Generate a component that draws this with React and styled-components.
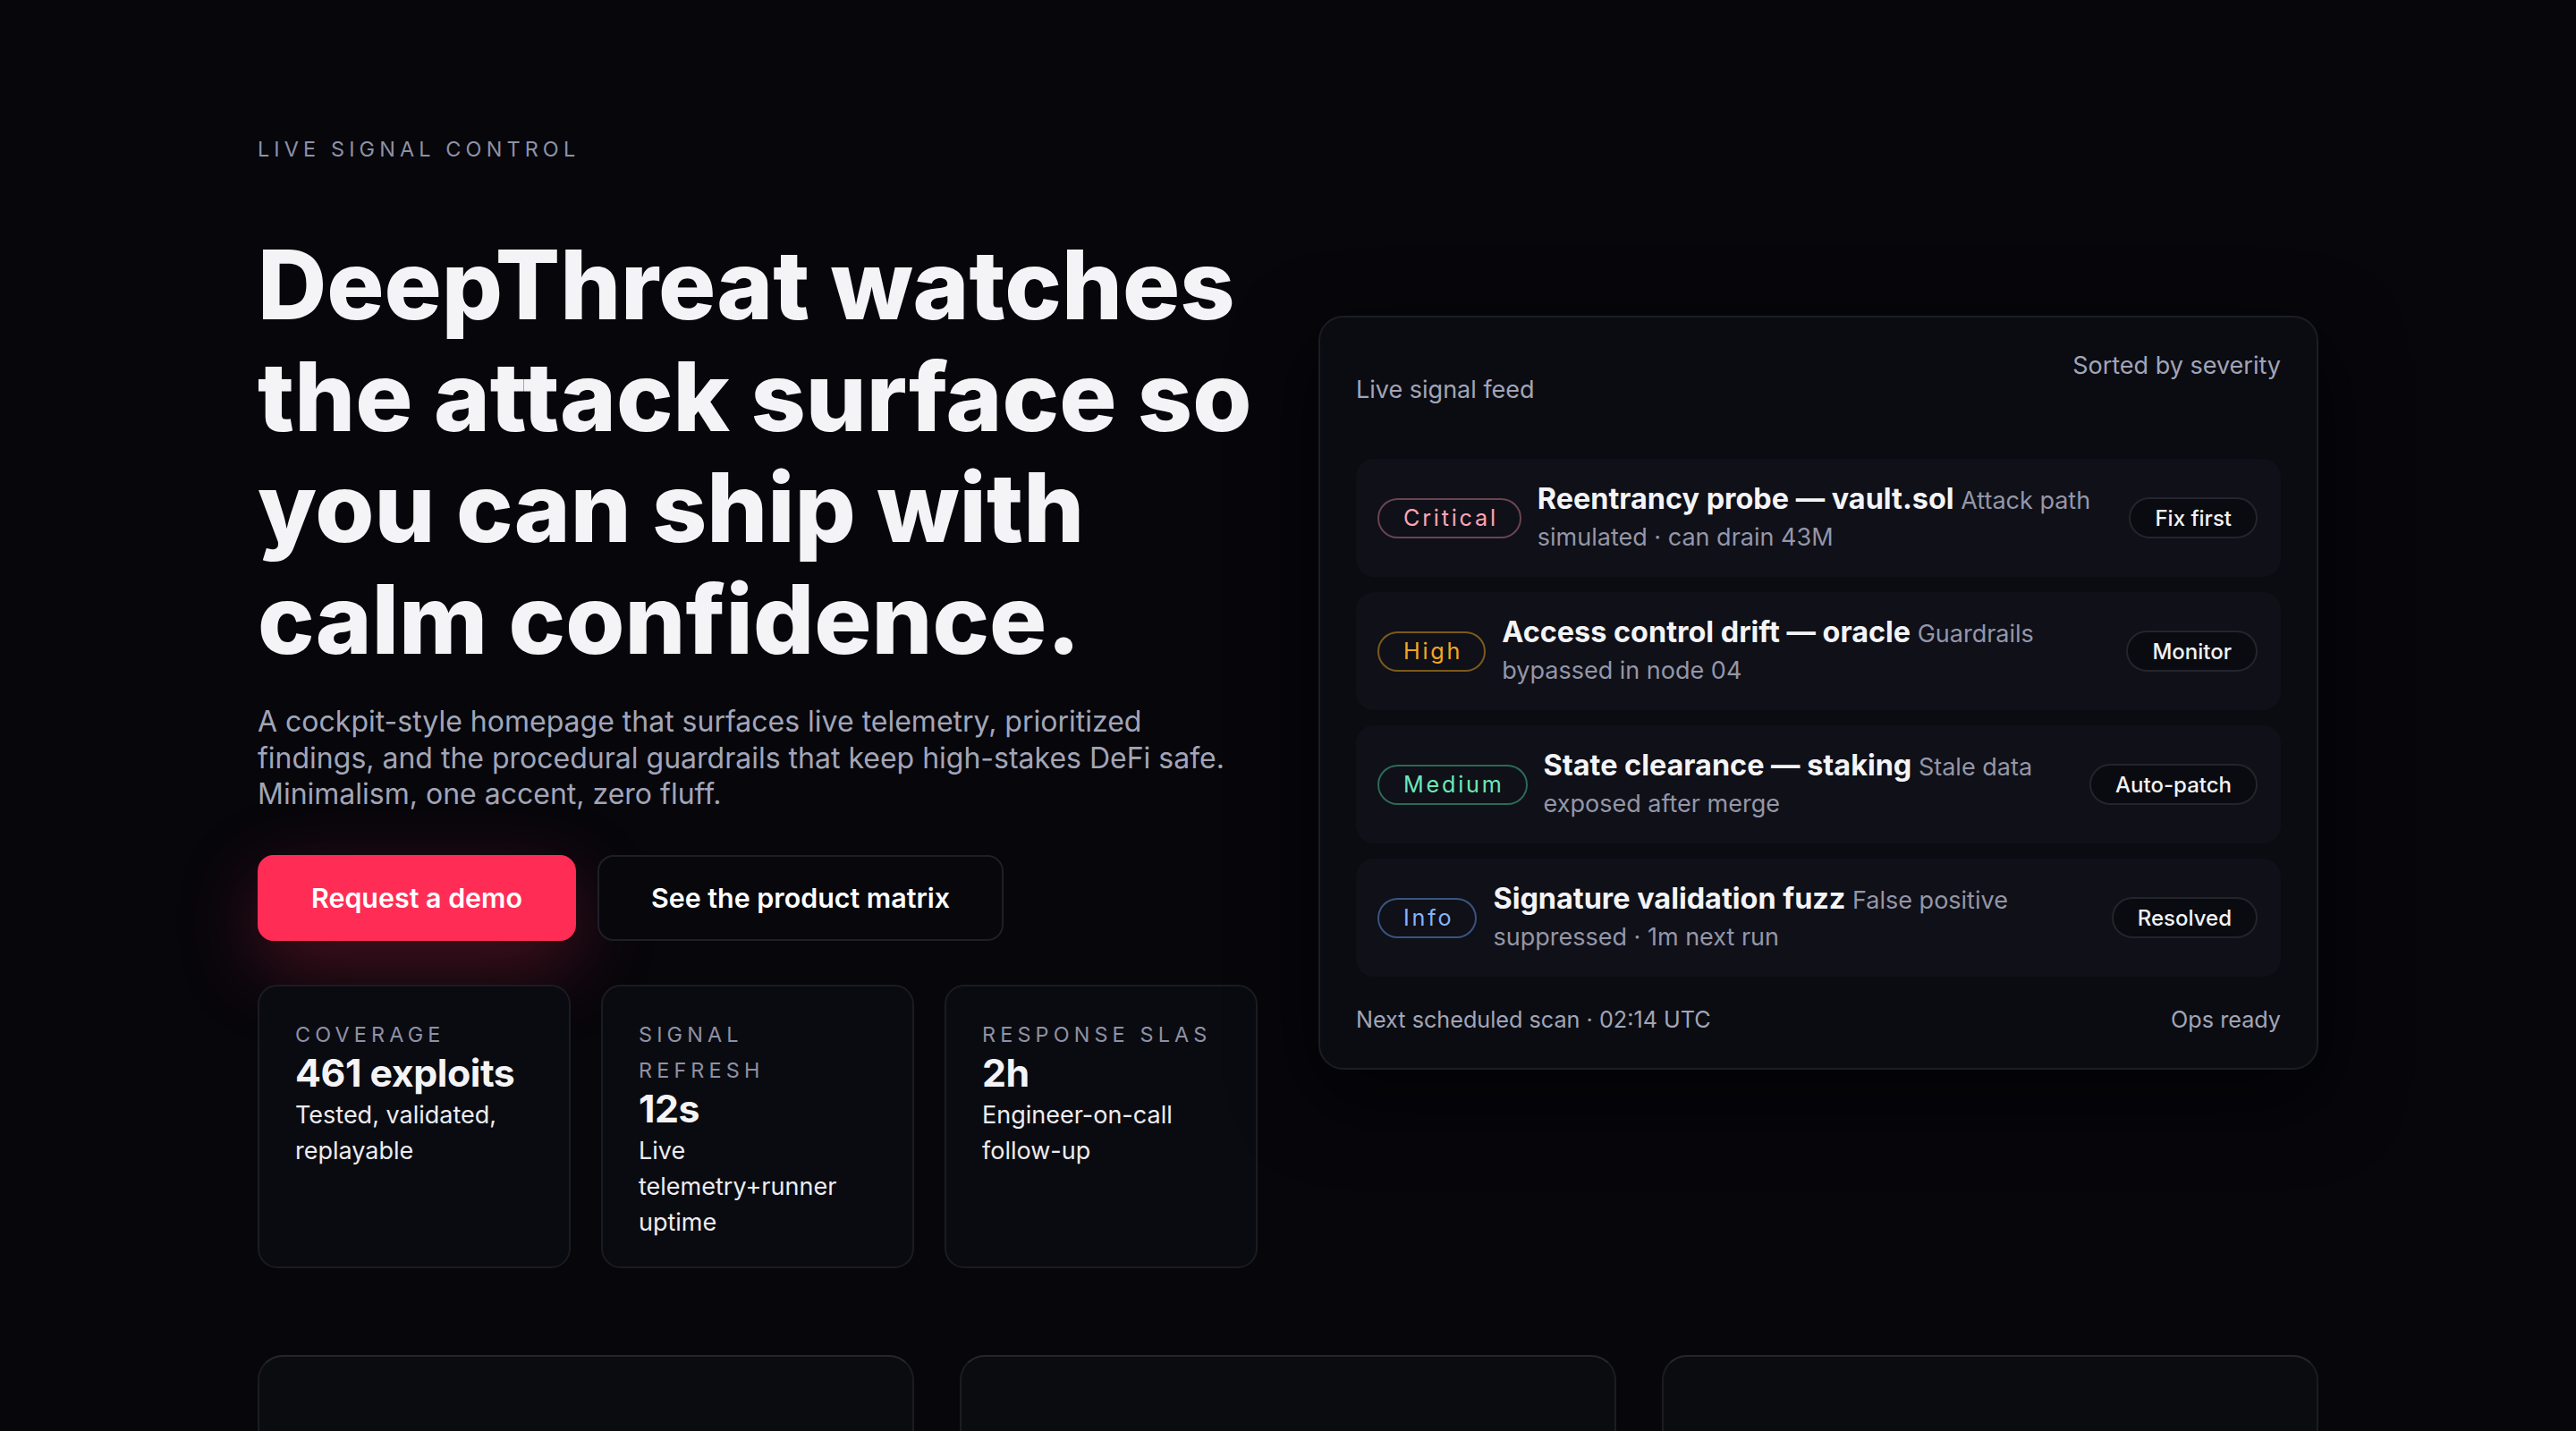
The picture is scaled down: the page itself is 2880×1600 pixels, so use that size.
import React from 'react'
import styled, { createGlobalStyle } from 'styled-components'

const GlobalStyle = createGlobalStyle`
  * { box-sizing: border-box; }
  html, body {
    margin: 0;
    background: #06060b;
    color: #f3f3f6;
    font-family: Inter, "Noto Sans", "Liberation Sans", sans-serif;
  }
`

const Page = styled.main`
  width: 2304px;
  margin: 0 auto;
  padding-top: 148px;
`

const Hero = styled.section`
  display: grid;
  grid-template-columns: 1fr 1fr;
  gap: 68px;
  align-items: start;
`

const Intro = styled.div`
  display: flex;
  flex-direction: column;
`

const Eyebrow = styled.p`
  margin: 0;
  font-size: 23.4px;
  line-height: 37.4px;
  letter-spacing: 0.22em;
  text-transform: uppercase;
  color: #8e91a5;
`

// a little breathing room on the right so the long second line never wraps early
const Headline = styled.h1`
  margin: 71px -30px 33px 0;
  font-size: 107px;
  line-height: 124.5px;
  font-weight: 800;
  letter-spacing: 0;
  color: #f4f4f6;
`

const Lede = styled.p`
  margin: 0;
  font-size: 32px;
  line-height: 40.4px;
  color: #a2a5b7;
`

const Actions = styled.div`
  display: flex;
  gap: 24px;
  margin-top: 47px;
`

const Button = styled.button`
  height: 96px;
  padding: 0 58px;
  border-radius: 18px;
  font-family: inherit;
  font-size: 30.4px;
  font-weight: 600;
  color: #fff;
  border: 2px solid ${(p) => (p.$primary ? '#ff2d55' : '#1f2027')};
  background: ${(p) => (p.$primary ? '#ff2d55' : '#07070c')};
  box-shadow: ${(p) =>
    p.$primary ? '0 28px 90px rgba(255, 45, 85, 0.28)' : 'none'};
`

const Stats = styled.div`
  display: grid;
  grid-template-columns: repeat(3, 1fr);
  gap: 34px;
  margin-top: 49px;
`

const StatCard = styled.div`
  padding: 34px 40px 29px;
  border: 2px solid #1b1c22;
  border-radius: 22px;
  background: #0a0b10;
`

const StatLabel = styled.div`
  font-size: 23.4px;
  line-height: 40px;
  letter-spacing: 0.22em;
  text-transform: uppercase;
  color: #8e91a5;
`

const StatValue = styled.div`
  font-size: 42.8px;
  line-height: 1.09;
  font-weight: 700;
  letter-spacing: -0.01em;
  color: #f4f4f6;
`

const StatNote = styled.div`
  margin-top: 4px;
  font-size: 27px;
  line-height: 40px;
  color: #ececf0;
`

const Feed = styled.div`
  margin-top: 205px;
  padding: 34px 40px;
  border: 2px solid #1c1d24;
  border-radius: 28px;
  background: #0b0c12;
  box-shadow: 0 30px 90px rgba(0, 0, 0, 0.55);
`

const FeedHeader = styled.div`
  display: flex;
  justify-content: space-between;
  align-items: flex-start;
  font-size: 27px;
  line-height: 40.4px;
  color: #a2a5b7;
`

const FeedTitle = styled.span`
  padding-top: 27px;
`

const SignalList = styled.div`
  display: flex;
  flex-direction: column;
  gap: 17px;
  margin-top: 57px;
`

const Signal = styled.div`
  display: grid;
  grid-template-columns: auto 1fr auto;
  align-items: center;
  gap: 18px;
  padding: 24px 26px 24px 24px;
  border-radius: 20px;
  background: #0f1018;
`

const tones = {
  critical: { border: '#6a4450', color: '#ffa3b5' },
  high: { border: '#7a5a1c', color: '#f5a623' },
  medium: { border: '#2c6a55', color: '#6ee7b7' },
  info: { border: '#3a5480', color: '#82b4ff' },
}

const Severity = styled.span`
  display: inline-flex;
  align-items: center;
  height: 45px;
  padding: 0 24px 0 27px;
  border: 2px solid ${(p) => tones[p.$tone].border};
  border-radius: 999px;
  font-size: 25.2px;
  letter-spacing: 0.11em;
  color: ${(p) => tones[p.$tone].color};
`

const SignalText = styled.p`
  margin: 0;
  font-size: 27px;
  line-height: 41px;
  color: #9496a8;
`

const SignalName = styled.strong`
  font-size: 32.4px;
  font-weight: 700;
  color: #f4f4f6;
`

const Action = styled.span`
  display: inline-flex;
  align-items: center;
  height: 46px;
  padding: 0 27px;
  border: 2px solid #24252c;
  border-radius: 999px;
  background: #0a0b10;
  font-size: 24px;
  font-weight: 500;
  color: #f2f2f5;
  white-space: nowrap;
`

const FeedFooter = styled.div`
  display: flex;
  justify-content: space-between;
  margin-top: 28px;
  font-size: 25.2px;
  line-height: 40px;
  color: #a2a5b7;
`

const Features = styled.section`
  display: grid;
  grid-template-columns: repeat(3, 1fr);
  gap: 51px;
  margin-top: 97px;
`

const FeatureCard = styled.div`
  min-height: 320px;
  border: 2px solid #1b1c22;
  border-top-color: #26272d;
  border-radius: 28px;
  background: #0b0c10;
`

const stats = [
  { label: 'Coverage', value: '461 exploits', note: 'Tested, validated, replayable' },
  { label: 'Signal refresh', value: '12s', note: 'Live telemetry+runner uptime' },
  { label: 'Response SLAs', value: '2h', note: 'Engineer-on-call follow-up' },
]

const signals = [
  {
    tone: 'critical',
    severity: 'Critical',
    name: 'Reentrancy probe — vault.sol',
    detail: 'Attack path simulated · can drain 43M',
    action: 'Fix first',
  },
  {
    tone: 'high',
    severity: 'High',
    name: 'Access control drift — oracle',
    detail: 'Guardrails bypassed in node 04',
    action: 'Monitor',
  },
  {
    tone: 'medium',
    severity: 'Medium',
    name: 'State clearance — staking',
    detail: 'Stale data exposed after merge',
    action: 'Auto-patch',
  },
  {
    tone: 'info',
    severity: 'Info',
    name: 'Signature validation fuzz',
    detail: 'False positive suppressed · 1m next run',
    action: 'Resolved',
  },
]

export default function App() {
  return (
    <>
      <GlobalStyle />
      <Page>
        <Hero>
          <Intro>
            <Eyebrow>Live signal control</Eyebrow>
            <Headline>
              DeepThreat watches the attack surface so you can ship with calm
              confidence.
            </Headline>
            <Lede>
              A cockpit-style homepage that surfaces live telemetry, prioritized
              findings, and the procedural guardrails that keep high-stakes DeFi
              safe. Minimalism, one accent, zero fluff.
            </Lede>
            <Actions>
              <Button $primary>Request a demo</Button>
              <Button>See the product matrix</Button>
            </Actions>
            <Stats>
              {stats.map((s) => (
                <StatCard key={s.label}>
                  <StatLabel>{s.label}</StatLabel>
                  <StatValue>{s.value}</StatValue>
                  <StatNote>{s.note}</StatNote>
                </StatCard>
              ))}
            </Stats>
          </Intro>

          <Feed>
            <FeedHeader>
              <FeedTitle>Live signal feed</FeedTitle>
              <span>Sorted by severity</span>
            </FeedHeader>
            <SignalList>
              {signals.map((s) => (
                <Signal key={s.name}>
                  <Severity $tone={s.tone}>{s.severity}</Severity>
                  <SignalText>
                    <SignalName>{s.name}</SignalName> {s.detail}
                  </SignalText>
                  <Action>{s.action}</Action>
                </Signal>
              ))}
            </SignalList>
            <FeedFooter>
              <span>Next scheduled scan · 02:14 UTC</span>
              <span>Ops ready</span>
            </FeedFooter>
          </Feed>
        </Hero>

        <Features>
          <FeatureCard />
          <FeatureCard />
          <FeatureCard />
        </Features>
      </Page>
    </>
  )
}
